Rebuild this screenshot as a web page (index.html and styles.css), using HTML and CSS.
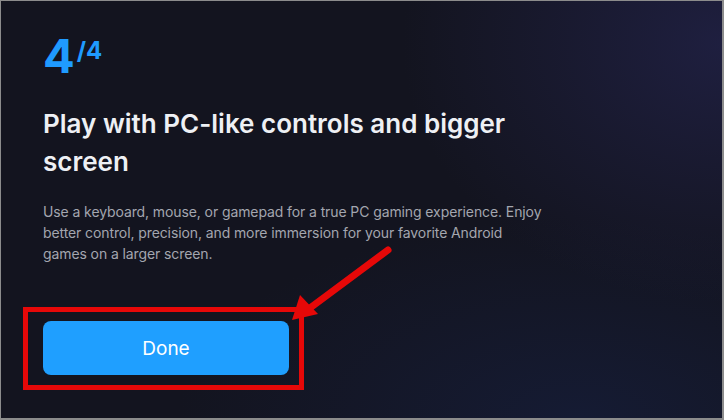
FILE: index.html
```html
<!DOCTYPE html>
<html>
<head>
<meta charset="utf-8">
<link rel="stylesheet" href="styles.css">
</head>
<body>
<div class="frame">
  <div class="content">
    <div class="step"><span class="step-num">4</span><span class="step-total">/4</span></div>
    <h1 class="title">Play with PC-like controls and bigger screen</h1>
    <p class="desc">Use a keyboard, mouse, or gamepad for a true PC gaming experience. Enjoy better control, precision, and more immersion for your favorite Android games on a larger screen.</p>
    <div class="highlight">
      <button class="done">Done</button>
    </div>
  </div>
  <svg class="arrow" width="724" height="420" viewBox="0 0 724 420">
    <line x1="388" y1="250" x2="310" y2="308" stroke="#e60808" stroke-width="7" stroke-linecap="round"/>
    <polygon points="292,320 300,295 318,314" fill="#e60808"/>
  </svg>
</div>
</body>
</html>
```
FILE: styles.css
```css
* { box-sizing: border-box; }
html, body { margin: 0; padding: 0; }
body {
  width: 724px;
  height: 420px;
  overflow: hidden;
  font-family: Inter, "Noto Sans", sans-serif;
}
.frame {
  position: relative;
  width: 724px;
  height: 420px;
  border-top: 1px solid #8c8c8c;
  border-left: 1px solid #8c8c8c;
  border-right: 2px solid #8c8c8c;
  border-bottom: 2px solid #8c8c8c;
  background:
    radial-gradient(ellipse 320px 260px at 100% 10%, rgba(40, 40, 90, 0.55), rgba(40, 40, 90, 0) 100%),
    radial-gradient(ellipse 400px 200px at 80% 100%, rgba(22, 30, 60, 0.7), rgba(22, 30, 60, 0) 100%),
    #13141f;
}
.content {
  padding: 31px 0 0 42px;
  display: flex;
  flex-direction: column;
  align-items: flex-start;
}
.step {
  color: #1f9bff;
  font-weight: 700;
  line-height: 1;
  display: flex;
  align-items: flex-start;
}
.step-num { font-size: 47px; line-height: 47px; }
.step-total { font-size: 24px; line-height: 24px; margin-top: 7px; margin-left: 2px; }
.title {
  margin: 26px 0 0 0;
  font-size: 26px;
  line-height: 38px;
  font-weight: 600;
  color: #eef0f4;
  width: 520px;
}
.desc {
  margin: 20px 0 0 0;
  font-size: 14px;
  letter-spacing: -0.1px;
  line-height: 21px;
  color: #a3a6af;
  width: 503px;
}
.highlight {
  margin: 43px 0 0 -20px;
  border: 5px solid #e60808;
  padding: 9px 10px 10px 15px;
}
.done {
  display: block;
  width: 246px;
  height: 54px;
  border: none;
  border-radius: 8px;
  background: #1f9fff;
  color: #ffffff;
  font-family: Inter, "Noto Sans", sans-serif;
  font-size: 19px;
  font-weight: 400;
}
.arrow {
  position: absolute;
  left: -1px;
  top: -1px;
  pointer-events: none;
}
```
